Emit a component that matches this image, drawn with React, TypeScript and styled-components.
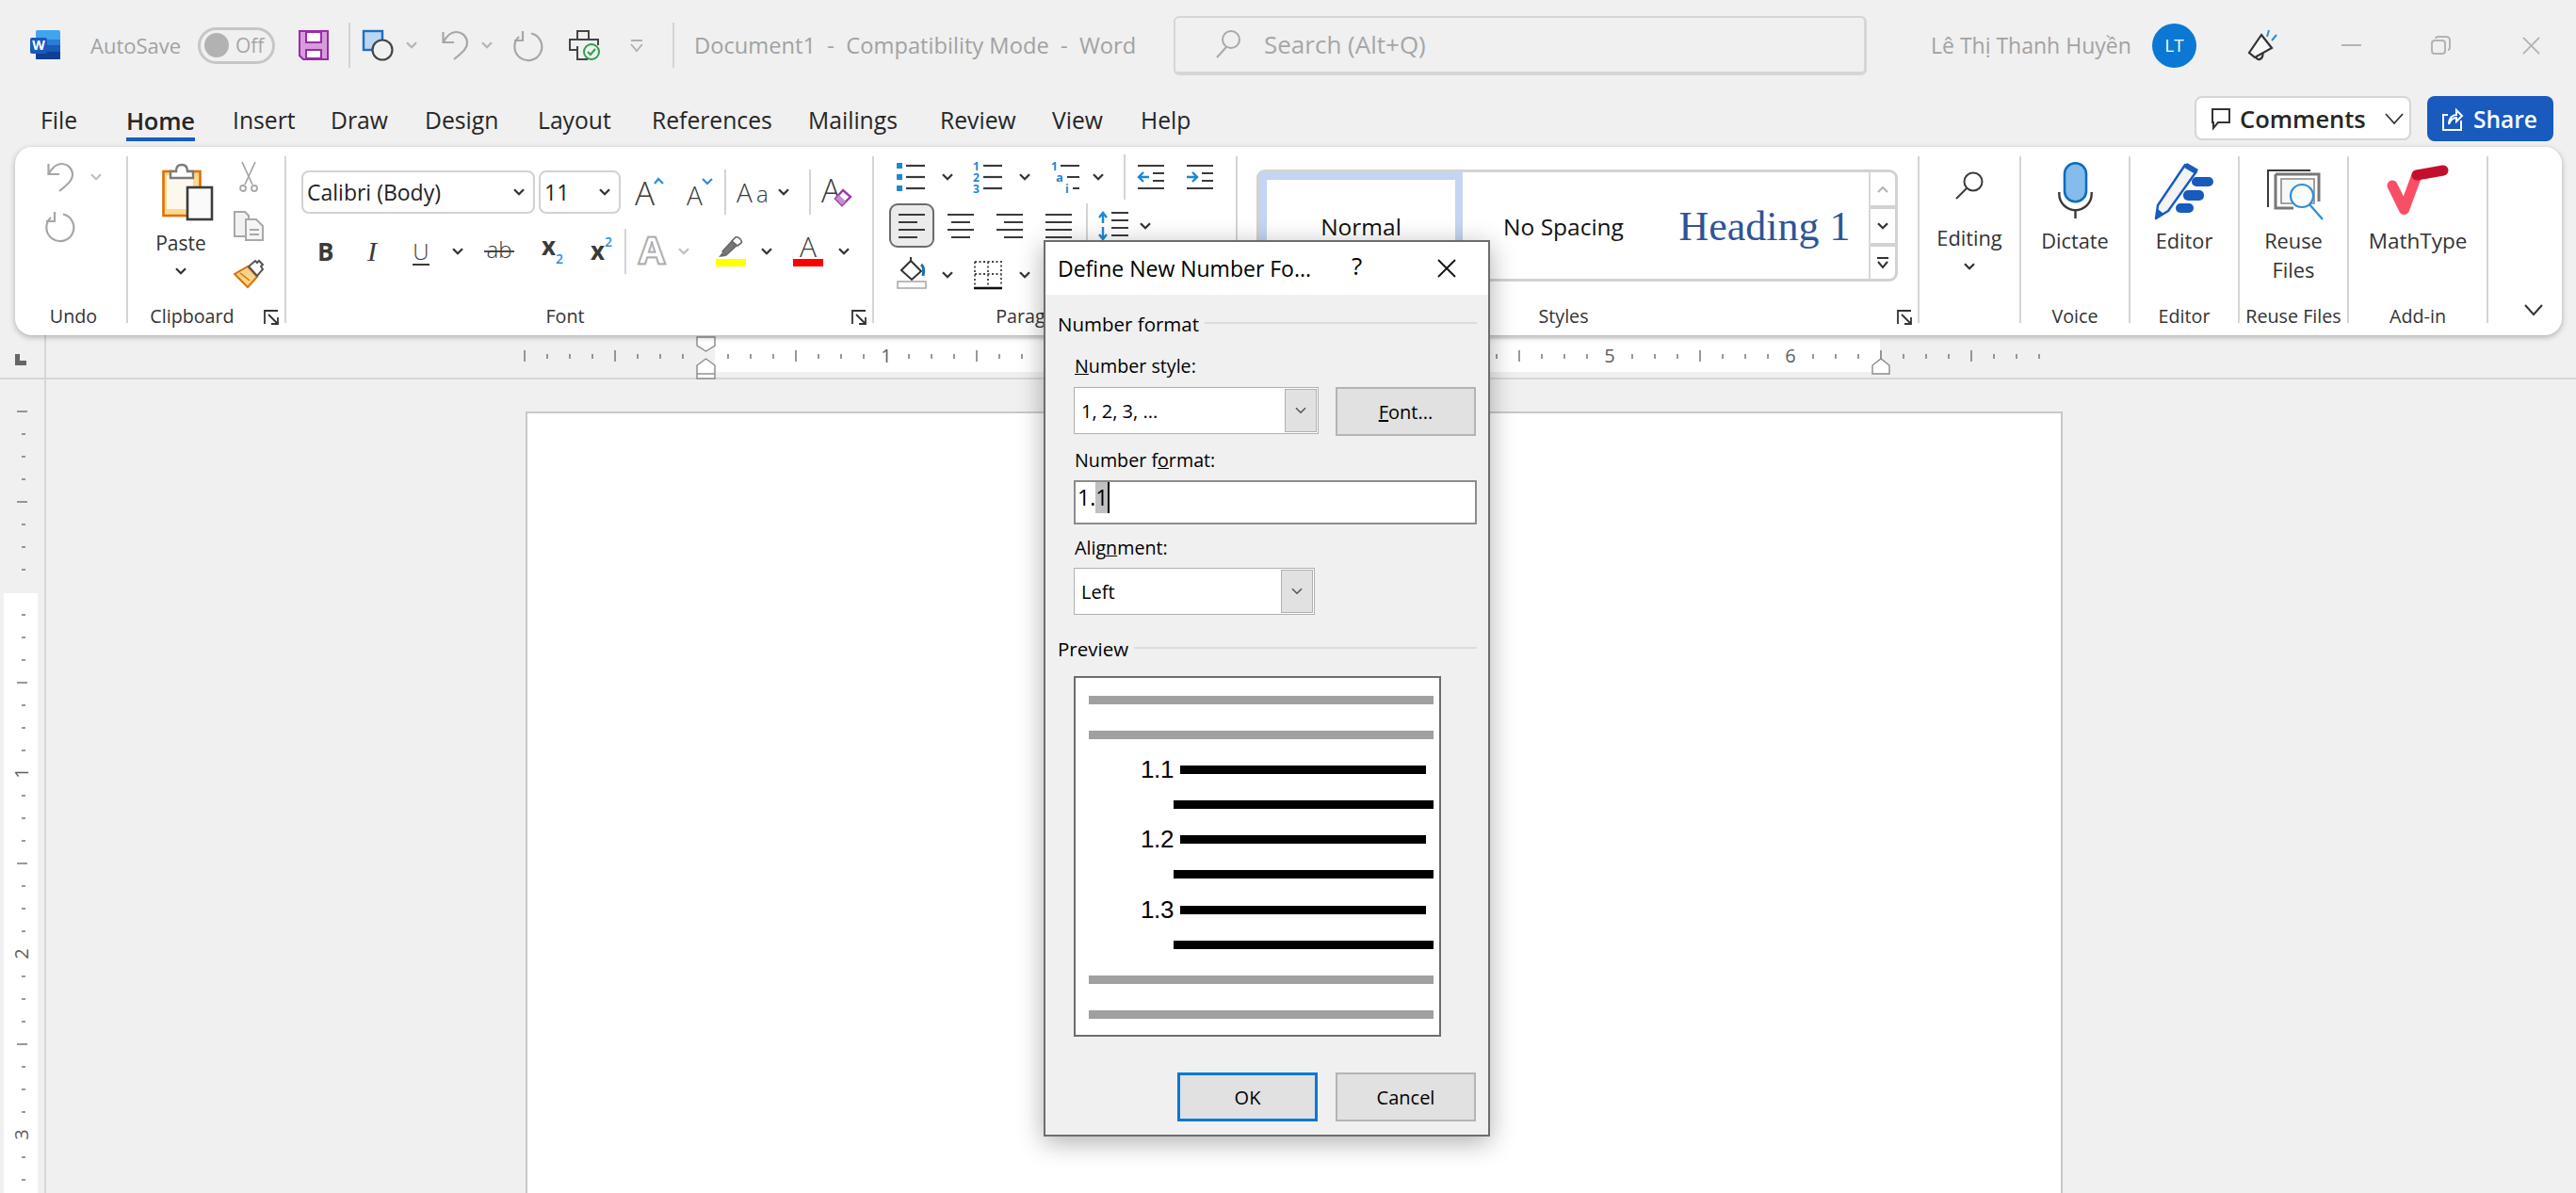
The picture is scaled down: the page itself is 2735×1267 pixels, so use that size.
import React from "react";
import styled, { createGlobalStyle } from "styled-components";

const GlobalStyle = createGlobalStyle`
  html, body {
    margin: 0;
    padding: 0;
    background: #f0f0f0;
    overflow: hidden;
    font-family: "Open Sans", "Noto Sans", sans-serif;
  }
  svg text {
    font-family: "Open Sans", "Noto Sans", sans-serif;
  }
`;

const Shell = styled.div`
  position: relative;
  width: 2735px;
  height: 1267px;
  overflow: hidden;
  background: #f0f0f0;
  color: #262626;
`;

const Ico = styled.svg<{ $ml?: number; $mt?: number }>`
  display: block;
  flex: none;
  overflow: visible;
  margin-left: ${(p) => p.$ml ?? 0}px;
  margin-top: ${(p) => p.$mt ?? 0}px;
`;

type IconProps = { ml?: number; mt?: number; c?: string; sw?: number };

const Chev = ({ ml, mt, c = "#333", sw = 2.3 }: IconProps) => (
  <Ico $ml={ml} $mt={mt} width={12} height={8} viewBox="0 0 12 8" fill="none">
    <path d="M1 1.2L6 6.2L11 1.2" stroke={c} strokeWidth={sw} />
  </Ico>
);

const UndoIcon = ({ ml, mt, c = "#a6a6a6" }: IconProps) => (
  <Ico $ml={ml} $mt={mt} width={28} height={32} viewBox="0 0 28 32" fill="none" stroke={c} strokeWidth={2.2}>
    <path d="M1.5 2V13H13" />
    <path d="M1.5 13C6 5 11 2 15 2C22 2 27 7 27 14C27 19 23 23 13 31" />
  </Ico>
);

const RedoIcon = ({ ml, mt, c = "#a6a6a6" }: IconProps) => (
  <Ico $ml={ml} $mt={mt} width={32} height={32} viewBox="0 0 32 32" fill="none" stroke={c} strokeWidth={2.2}>
    <path d="M19 3.5A14.5 14.5 0 1 1 6 7" />
    <path d="M10 1V11H1" />
  </Ico>
);

const WordLogo = () => (
  <Ico $ml={32} width={32} height={32} viewBox="0 0 32 32">
    <rect x={6} y={0} width={26} height={31} rx={2} fill="#41a5ee" />
    <rect x={6} y={10} width={26} height={21} fill="#2b7cd3" />
    <rect x={6} y={16} width={26} height={15} fill="#185abd" />
    <path d="M6 23H32V29Q32 31 30 31H8Q6 31 6 29Z" fill="#103f91" />
    <rect x={0} y={8} width={18} height={17} rx={2} fill="#185abd" />
    <text x={9} y={21} fontSize={14} fontWeight={700} fill="#fff" textAnchor="middle">
      W
    </text>
  </Ico>
);

const SaveIcon = () => (
  <Ico $ml={25} width={32} height={32} viewBox="0 0 32 32" stroke="#9a2aa8" strokeWidth={2}>
    <path d="M1 1H31V31H5L1 27Z" fill="#d79ddb" />
    <rect x={8} y={2} width={16} height={11} fill="#fff" />
    <rect x={8} y={21} width={16} height={9} fill="#fff" />
  </Ico>
);

const ShapesIcon = () => (
  <Ico $ml={13} width={33} height={32} viewBox="0 0 33 32">
    <rect x={1} y={1} width={20} height={20} fill="#b9d6f2" stroke="#1e6fbf" strokeWidth={2.4} />
    <circle cx={21} cy={21} r={10.5} fill="#f0f0f0" stroke="#444" strokeWidth={2.2} />
  </Ico>
);

const PrintIcon = () => (
  <Ico $ml={27} width={32} height={32} viewBox="0 0 32 32" fill="none">
    <path d="M9 9V1H21V9" stroke="#444" strokeWidth={2} />
    <path d="M9 21H1V10H31V16" stroke="#444" strokeWidth={2} />
    <path d="M9 17V31H20" stroke="#444" strokeWidth={2} />
    <circle cx={24} cy={23} r={8} fill="#f0f0f0" stroke="#2e9e4f" strokeWidth={2} />
    <path d="M20 23L23 26L28 20" stroke="#2e9e4f" strokeWidth={2} />
  </Ico>
);

const CustomizeIcon = () => (
  <Ico $ml={32} width={16} height={13} viewBox="0 0 16 13" fill="none" stroke="#b0b0b0" strokeWidth={1.8}>
    <path d="M2 1H14M2 5L8 12L14 5" />
  </Ico>
);

const SearchGlass = () => (
  <Ico $ml={43} width={26} height={30} viewBox="0 0 26 30" fill="none" stroke="#a8a8a8" strokeWidth={2}>
    <circle cx={16} cy={10} r={9} />
    <path d="M11 18L1 29" />
  </Ico>
);

const MegaphoneIcon = () => (
  <Ico $ml={55} width={30} height={32} viewBox="0 0 30 32" fill="none">
    <path d="M14 5L25 19L7 29L1 24Z" stroke="#333" strokeWidth={2.2} fill="#f7f7f7" />
    <path d="M8 28C9 33 16 32 15.5 24" stroke="#333" strokeWidth={2.2} />
    <path d="M20 7L22 0M25 11L30 5" stroke="#2b8fd9" strokeWidth={2} />
  </Ico>
);

const RestoreIcon = () => (
  <Ico $ml={74} width={21} height={20} viewBox="0 0 21 20" fill="none" stroke="#b4b4b4" strokeWidth={2}>
    <rect x={1} y={5} width={14} height={14} rx={3} />
    <path d="M5 3Q5 1 8 1H16Q20 1 20 5V12Q20 15 18 15" />
  </Ico>
);

const CloseGlyph = ({ ml, size, c, sw }: { ml: number; size: number; c: string; sw: number }) => (
  <Ico $ml={ml} width={size} height={size} viewBox="0 0 20 20" fill="none" stroke={c} strokeWidth={sw}>
    <path d="M1 1L19 19M19 1L1 19" />
  </Ico>
);

const CommentBubble = () => (
  <Ico width={20} height={22} viewBox="0 0 20 22" fill="none" stroke="#333" strokeWidth={2}>
    <path d="M1 1H19V15H7L2 21V15H1Z" />
  </Ico>
);

const ShareIcon = () => (
  <Ico width={22} height={26} viewBox="0 0 22 26" fill="none" stroke="#fff" strokeWidth={2}>
    <path d="M6 9H1V25H20V15" />
    <path d="M7 19C7 12 11 9 15 9V4L21 10L15 16V12C11 12 9 14 7 19Z" />
  </Ico>
);

const PasteIcon = () => (
  <Ico $ml={14} width={54} height={61} viewBox="0 0 54 61">
    <rect x={1.5} y={9} width={39} height={47} fill="#fdd98f" stroke="#e07000" strokeWidth={2.6} />
    <rect x={5} y={13} width={28} height={36} fill="#fdf8ee" />
    <path d="M9 16V9H15Q15 2 21 2Q27 2 27 9H33V16Z" fill="#fff" stroke="#7a7a7a" strokeWidth={2.4} />
    <rect x={27} y={26} width={26} height={34} fill="#fafafa" stroke="#3c3c3c" strokeWidth={2.6} />
  </Ico>
);

const ScissorsIcon = () => (
  <Ico $ml={6} width={20} height={32} viewBox="0 0 20 32" fill="none" stroke="#a8a8a8" strokeWidth={1.8}>
    <path d="M3 0L14 24M17 0L6 24" />
    <circle cx={4} cy={28} r={3} />
    <circle cx={16} cy={28} r={3} />
  </Ico>
);

const CopyIcon = () => (
  <Ico $mt={20} width={32} height={32} viewBox="0 0 32 32" fill="#f2f2f2" stroke="#a8a8a8" strokeWidth={2}>
    <path d="M1 1H12L16 5V27H1Z" />
    <path d="M13 9H24L31 16V31H13Z" fill="#f5f5f5" />
    <path d="M17 20H27M17 25H27" />
  </Ico>
);

const PainterIcon = () => (
  <Ico $mt={20} width={32} height={30} viewBox="0 0 32 30">
    <path d="M1 15L15 7L25 18L15 29Z" fill="#f6d58d" stroke="#e07000" strokeWidth={2} />
    <path d="M7 14L17 22" stroke="#e07000" strokeWidth={1.6} />
    <path d="M16 7L23 1L25 3L27 1L31 5L29 7L31 10L25 17Z" fill="#fff" stroke="#555" strokeWidth={2} />
  </Ico>
);

const LauncherIcon = () => (
  <svg width={16} height={16} viewBox="0 0 16 16" fill="none" stroke="#333" strokeWidth={1.8}>
    <path d="M1 15V1H15" />
    <path d="M5 5L15 15M15 8V15H8" />
  </svg>
);

const GrowIcon = () => (
  <Ico $ml={15} width={30} height={34} viewBox="0 0 30 34">
    <text x={0} y={31} fontSize={35} fontWeight={300} fill="#3a3a3a">
      A
    </text>
    <path d="M21 8L25 3L30 8" stroke="#2b8fd9" strokeWidth={2.2} fill="none" />
  </Ico>
);

const ShrinkIcon = () => (
  <Ico $ml={25} width={27} height={34} viewBox="0 0 27 34">
    <text x={0} y={31} fontSize={28} fontWeight={300} fill="#3a3a3a">
      A
    </text>
    <path d="M17 3L22 8L27 3" stroke="#2b8fd9" strokeWidth={2.2} fill="none" />
  </Ico>
);

const CaseIcon = () => (
  <Ico $ml={12} width={32} height={30} viewBox="0 0 32 30">
    <text x={-1} y={26} fontSize={28} fontWeight={300} fill="#3a3a3a">
      A
    </text>
    <text x={20} y={26} fontSize={24} fontWeight={300} fill="#3a3a3a">
      a
    </text>
  </Ico>
);

const ClearIcon = () => (
  <Ico $ml={11} width={32} height={34} viewBox="0 0 32 34">
    <text x={0} y={28} fontSize={34} fontWeight={300} fill="#3a3a3a">
      A
    </text>
    <path d="M15 24L23 15L31 22L22 31Z" fill="#fff" stroke="#9a3aa8" strokeWidth={2.4} />
    <path d="M15 24L19 20L26 27L22 31Z" fill="#c78ad0" />
  </Ico>
);

const StrikeIcon = () => (
  <Ico $ml={22} width={32} height={24} viewBox="0 0 32 24">
    <text x={16} y={19} fontSize={24} fontWeight={300} fill="#3a3a3a" textAnchor="middle">
      ab
    </text>
    <path d="M0 12H32" stroke="#3a3a3a" strokeWidth={1.8} />
  </Ico>
);

const SubIcon = () => (
  <Ico $ml={29} width={22} height={30} viewBox="0 0 22 30">
    <text x={0} y={19} fontSize={26} fontWeight={700} fill="#3a3a3a">
      x
    </text>
    <text x={15} y={28} fontSize={14} fontWeight={600} fill="#2b8fd9">
      2
    </text>
  </Ico>
);

const SupIcon = () => (
  <Ico $ml={30} width={22} height={30} viewBox="0 0 22 30">
    <text x={0} y={24} fontSize={26} fontWeight={700} fill="#3a3a3a">
      x
    </text>
    <text x={15} y={10} fontSize={14} fontWeight={600} fill="#2b8fd9">
      2
    </text>
  </Ico>
);

const EffectsIcon = () => (
  <Ico $ml={11} width={32} height={32} viewBox="0 0 32 32">
    <text x={16} y={29} fontSize={40} fontWeight={700} fill="#f4f4f4" stroke="#c4c4c4" strokeWidth={3} textAnchor="middle">
      A
    </text>
    <text x={16} y={29} fontSize={40} fontWeight={700} fill="#fff" stroke="#9c9c9c" strokeWidth={1} textAnchor="middle">
      A
    </text>
  </Ico>
);

const HighlightIcon = () => (
  <Ico $ml={28} width={32} height={32} viewBox="0 0 32 32">
    <path d="M3 22L7 17L11 21Z" fill="#666" />
    <path d="M7 16L18 4L23 9L11 20Z" fill="#777" stroke="#666" strokeWidth={1.4} />
    <path d="M17 5L21 1Q23 0 26 3Q28 5 27 7L23 10Z" fill="#fff" stroke="#666" strokeWidth={1.6} />
    <rect x={0} y={24} width={32} height={8} fill="#ffff00" />
  </Ico>
);

const FontColorIcon = () => (
  <Ico $ml={22} width={32} height={32} viewBox="0 0 32 32">
    <text x={16} y={22} fontSize={30} fontWeight={300} fill="#3a3a3a" textAnchor="middle">
      A
    </text>
    <rect x={0} y={24} width={32} height={8} fill="#ff0000" />
  </Ico>
);

const BLUE = "#1e88d2";
const INK = "#3a3a3a";

const BulletsIcon = () => (
  <Ico $ml={24} width={30} height={30} viewBox="0 0 30 30" stroke={INK} strokeWidth={2.2}>
    {[0, 12, 24].map((y) => (
      <g key={y}>
        <rect x={0} y={y} width={6} height={6} fill={BLUE} stroke="none" />
        <path d={`M10 ${y + 3}H30`} />
      </g>
    ))}
  </Ico>
);

const NumberingIcon = () => (
  <Ico $ml={21} width={31} height={34} viewBox="0 0 31 34">
    {[1, 2, 3].map((n, i) => (
      <g key={n}>
        <text x={0} y={10 + i * 12} fontSize={12} fontWeight={700} fill={BLUE}>
          {n}
        </text>
        <path d={`M11 ${5 + i * 12}H31`} stroke={INK} strokeWidth={2.2} />
      </g>
    ))}
  </Ico>
);

const MultilevelIcon = () => (
  <Ico $ml={22} width={30} height={34} viewBox="0 0 30 34">
    <text x={0} y={10} fontSize={12} fontWeight={700} fill={BLUE}>
      1
    </text>
    <text x={5} y={22} fontSize={13} fontWeight={700} fill={BLUE}>
      a
    </text>
    <text x={15} y={34} fontSize={12} fontWeight={700} fill={BLUE}>
      i
    </text>
    <path d="M10 5H30M17 17H30M23 29H30" stroke={INK} strokeWidth={2.2} />
  </Ico>
);

const IndentIcon = ({ ml, out }: { ml: number; out?: boolean }) => (
  <Ico $ml={ml} width={28} height={26} viewBox="0 0 28 26" fill="none">
    <path d="M0 1H28M16 9H28M16 17H28M0 25H28" stroke={INK} strokeWidth={2.2} />
    <path d={out ? "M12 13H1M6 8L1 13L6 18" : "M0 13H11M6 8L11 13L6 18"} stroke={BLUE} strokeWidth={2.4} />
  </Ico>
);

const AlignIcon = ({ ml, mode }: { ml?: number; mode: "left" | "center" | "right" | "justify" }) => {
  const short = mode === "left" ? "H20" : mode === "center" ? "H24" : "H28";
  const start = mode === "left" ? 0 : mode === "center" ? 4 : mode === "right" ? 8 : 0;
  return (
    <Ico $ml={ml} width={28} height={26} viewBox="0 0 28 26" stroke={INK} strokeWidth={2.2}>
      <path d={`M0 1H28M${start} 9${short}M0 17H28M${start} 25${short}`} />
    </Ico>
  );
};

const LineSpacingIcon = () => (
  <Ico $ml={11} width={32} height={30} viewBox="0 0 32 30" fill="none">
    <path d="M14 1H32M14 9H32M14 17H32M14 25H32" stroke={INK} strokeWidth={2.2} />
    <path d="M5 12V1M1 6L5 1L9 6M5 16V29M1 24L5 29L9 24" stroke={BLUE} strokeWidth={2.4} />
  </Ico>
);

const ShadingIcon = () => (
  <Ico $ml={24} width={32} height={33} viewBox="0 0 32 33" fill="none">
    <path d="M5 12L15 2L26 13L16 22Z" stroke="#333" strokeWidth={2} />
    <path d="M15 2V-2" stroke="#333" strokeWidth={2} />
    <path d="M26 6Q30 9 28 18" stroke="#1a6fb8" strokeWidth={3} />
    <rect x={1} y={24} width={30} height={7} fill="#fff" stroke="#aaa" strokeWidth={1.6} />
  </Ico>
);

const BordersIcon = () => (
  <Ico $ml={22} width={30} height={30} viewBox="0 0 30 30" fill="none">
    <path d="M1 1H29V26M1 1V26M15 1V26M1 14H29" stroke="#444" strokeWidth={1.8} strokeDasharray="2 2.5" />
    <path d="M0 29H30" stroke="#111" strokeWidth={2.6} />
  </Ico>
);

const GlassIcon = () => (
  <Ico width={30} height={30} viewBox="0 0 30 30" fill="none" stroke="#3a3a3a" strokeWidth={2}>
    <circle cx={19} cy={11} r={9.5} />
    <path d="M12 18L1 29" />
  </Ico>
);

const MicIcon = () => (
  <Ico width={37} height={60} viewBox="0 0 37 60" fill="none">
    <rect x={7} y={1.3} width={23} height={41} rx={11.5} fill="#85bcec" stroke="#0f6cbd" strokeWidth={2.6} />
    <path d="M1.3 32V34A17 17 0 0 0 35.7 34V32" stroke="#3a3a3a" strokeWidth={2.4} />
    <path d="M18.5 50V60" stroke="#3a3a3a" strokeWidth={2.4} />
  </Ico>
);

const EditorIcon = () => (
  <Ico width={62} height={61} viewBox="0 0 62 61">
    <rect x={39} y={16} width={23} height={10} rx={5} fill="#185abd" />
    <rect x={30} y={30} width={22} height={11} rx={5} fill="#185abd" />
    <rect x={22} y={44} width={19} height={10} rx={5} fill="#185abd" />
    <path d="M1 60L3 46L32 3L44 10L14 52Z" fill="#f3f3f3" stroke="#185abd" strokeWidth={2.4} strokeLinejoin="round" />
    <path d="M34 1L46 8L43 13L31 6Z" fill="#185abd" />
    <path d="M1 60L3 50L9 55Z" fill="#185abd" />
  </Ico>
);

const ReuseIcon = () => (
  <Ico $ml={3} width={60} height={53} viewBox="0 0 60 53" fill="none">
    <path d="M1 40V1H46" stroke="#3a3a3a" strokeWidth={2} />
    <path d="M9 5H55V34" stroke="#777" strokeWidth={3} />
    <path d="M9 5V41H28" stroke="#777" strokeWidth={3} />
    <path d="M15 10H50V36H15Z" fill="#f7f7f7" stroke="#888" strokeWidth={1.6} />
    <circle cx={37} cy={28} r={12} fill="#fbfbfb" stroke="#2b8fd9" strokeWidth={2.2} />
    <path d="M45 37L59 53" stroke="#2b8fd9" strokeWidth={2.2} />
  </Ico>
);

const MathTypeIcon = () => (
  <Ico width={64} height={54} viewBox="0 0 64 54" fill="none" strokeLinecap="round">
    <path d="M5 22L17.5 47.5L31 11" stroke="#f94f66" strokeWidth={11} strokeLinejoin="round" />
    <path d="M31 11L59 6" stroke="#c30f2e" strokeWidth={11} />
  </Ico>
);

const GalleryScrollUp = () => (
  <Ico width={12} height={8} viewBox="0 0 12 8" fill="none">
    <path d="M1 7L6 2L11 7" stroke="#b4b4b4" strokeWidth={2} />
  </Ico>
);

const GalleryMore = () => (
  <Ico width={12} height={12} viewBox="0 0 12 12" fill="none" stroke="#333" strokeWidth={2}>
    <path d="M0 1H12M1 5L6 11L11 5" />
  </Ico>
);

const CollapseChevron = () => (
  <Ico width={20} height={12} viewBox="0 0 20 12" fill="none" stroke="#333" strokeWidth={2}>
    <path d="M1 1L10 11L19 1" />
  </Ico>
);

/* title bar */

const TitleBar = styled.header`
  display: flex;
  align-items: center;
  height: 96px;
`;

const TitleText = styled.span<{ $ml: number; $w: number; $size?: number }>`
  flex: none;
  width: ${(p) => p.$w}px;
  margin-left: ${(p) => p.$ml}px;
  font-size: ${(p) => p.$size ?? 22}px;
  color: #a2a2a2;
  white-space: pre;
`;

const Toggle = styled.div`
  flex: none;
  box-sizing: border-box;
  display: flex;
  align-items: center;
  width: 82px;
  height: 39px;
  margin-left: 18px;
  padding-left: 4px;
  gap: 7px;
  border: 3px solid #c6c6c6;
  border-radius: 20px;
  font-size: 21px;
  color: #a6a6a6;
`;

const ToggleKnob = styled.span`
  width: 26px;
  height: 26px;
  border-radius: 50%;
  background: #b2b2b2;
`;

const TitleDivider = styled.span<{ $ml: number }>`
  flex: none;
  width: 2px;
  height: 48px;
  margin-left: ${(p) => p.$ml}px;
  background: #d4d4d4;
`;

const SearchBox = styled.div`
  flex: none;
  box-sizing: border-box;
  display: flex;
  align-items: center;
  width: 736px;
  height: 63px;
  margin-left: 41px;
  border: 2px solid #d6d6d6;
  border-bottom-width: 4px;
  border-right-width: 3px;
  border-radius: 6px;
  font-size: 26px;
  color: #a6a6a6;
`;

const SearchHint = styled.span`
  margin-left: 25px;
`;

const Avatar = styled.span`
  flex: none;
  display: flex;
  align-items: center;
  justify-content: center;
  width: 47px;
  height: 47px;
  margin-left: 21px;
  border-radius: 50%;
  background: #0a78d4;
  color: #fff;
  font-size: 19px;
`;

const MinLine = styled.span`
  flex: none;
  width: 21px;
  height: 2px;
  margin-left: 69px;
  background: #b4b4b4;
`;

/* tabs */

const TabRow = styled.nav`
  display: flex;
  height: 60px;
  box-sizing: border-box;
  padding-left: 43px;
  padding-top: 6px;
`;

const TabList = styled.div`
  display: flex;
  padding-top: 8px;
`;

const Tab = styled.div<{ $w: number }>`
  width: ${(p) => p.$w}px;
  flex: none;
  font-size: 24.7px;
  line-height: 36px;
  color: #262626;
`;

const ActiveTabLabel = styled.span`
  display: inline-block;
  font-weight: 600;
  font-size: 25.5px;
  letter-spacing: -0.3px;
  border-bottom: 4px solid #185abd;
`;

const CommentsButton = styled.div`
  box-sizing: border-box;
  display: flex;
  align-items: center;
  width: 230px;
  height: 47px;
  margin-left: auto;
  padding-left: 16px;
  background: #fff;
  border: 2px solid #d6d6d6;
  border-radius: 8px;
  font-size: 25.5px;
  font-weight: 600;
`;

const CommentsLabel = styled.span`
  margin-left: 10px;
  margin-right: 20px;
`;

const ShareButton = styled.div`
  display: flex;
  align-items: center;
  gap: 11px;
  box-sizing: border-box;
  width: 134px;
  height: 48px;
  margin-left: 17px;
  margin-right: 24px;
  padding-left: 16px;
  background: #185abd;
  border-radius: 8px;
  color: #fff;
  font-size: 24.5px;
  font-weight: 600;
`;

/* ribbon */

const Ribbon = styled.section`
  position: relative;
  z-index: 2;
  display: flex;
  box-sizing: border-box;
  width: 2704px;
  height: 200px;
  margin-left: 16px;
  padding-top: 10px;
  background: #fff;
  border-radius: 18px;
  box-shadow: 0 2px 6px rgba(0, 0, 0, 0.28);
`;

const Group = styled.div<{ $w: number }>`
  position: relative;
  flex: none;
  display: flex;
  flex-direction: column;
  box-sizing: border-box;
  width: ${(p) => p.$w}px;
  height: 177px;
  border-right: 2px solid #d4d4d4;
`;

const GroupBody = styled.div`
  flex: 1;
  min-height: 0;
`;

const GroupLabel = styled.div<{ $launcher?: boolean; $pl?: number }>`
  flex: none;
  box-sizing: border-box;
  height: 14px;
  line-height: 14px;
  padding-right: ${(p) => (p.$launcher ? 30 : 0)}px;
  padding-left: ${(p) => p.$pl ?? 0}px;
  font-size: 19.7px;
  text-align: center;
  color: #333;
`;

const Launcher = styled.span`
  position: absolute;
  right: 6px;
  bottom: -1px;
  height: 16px;
`;

const StackRow = styled.div<{ $h: number; $mt: number; $ml?: number }>`
  display: flex;
  align-items: center;
  height: ${(p) => p.$h}px;
  margin-top: ${(p) => p.$mt}px;
  padding-left: ${(p) => p.$ml ?? 0}px;
`;

const RowDivider = styled.span<{ $ml: number }>`
  flex: none;
  width: 2px;
  height: 48px;
  margin-left: ${(p) => p.$ml}px;
  background: #d4d4d4;
`;

const ClipboardBody = styled(GroupBody)`
  display: flex;
`;

const BigButton = styled.div<{ $w?: number }>`
  flex: none;
  display: flex;
  flex-direction: column;
  align-items: center;
  width: ${(p) => (p.$w ? `${p.$w}px` : "100%")};
`;

const BigIconSlot = styled.div<{ $h: number; $pt: number }>`
  box-sizing: border-box;
  display: flex;
  justify-content: center;
  height: ${(p) => p.$h}px;
  padding-top: ${(p) => p.$pt}px;
`;

const BigLabel = styled.div<{ $size?: number }>`
  font-size: ${(p) => p.$size ?? 21.8}px;
  line-height: 31px;
  color: #333;
  white-space: nowrap;
`;

const SmallTools = styled.div`
  display: flex;
  flex-direction: column;
  padding-top: 6px;
`;

const Combo = styled.div<{ $w: number; $ml: number }>`
  flex: none;
  box-sizing: border-box;
  display: flex;
  align-items: center;
  width: ${(p) => p.$w}px;
  height: 46px;
  margin-left: ${(p) => p.$ml}px;
  padding: 0 9px 0 4px;
  border: 2px solid #d2d2d2;
  border-radius: 8px;
  font-size: 23px;
  color: #222;
`;

const ComboText = styled.span`
  flex: 1;
`;

const BoldGlyph = styled.span`
  flex: none;
  width: 15px;
  margin-left: 33px;
  font-size: 26px;
  font-weight: 700;
  line-height: 26px;
  color: #3a3a3a;
`;

const ItalicGlyph = styled.span`
  flex: none;
  width: 13px;
  margin-left: 38px;
  font-family: "Liberation Serif", serif;
  font-size: 30px;
  font-style: italic;
  line-height: 30px;
  color: #3a3a3a;
`;

const UnderlineGlyph = styled.span`
  flex: none;
  width: 18px;
  margin-left: 35px;
  font-size: 24px;
  font-weight: 300;
  line-height: 27px;
  text-align: center;
  border-bottom: 2.5px solid #3a3a3a;
  color: #3a3a3a;
`;

const SelectedAlign = styled.div`
  flex: none;
  box-sizing: border-box;
  display: flex;
  align-items: center;
  justify-content: center;
  width: 48px;
  height: 47px;
  margin-left: 16px;
  background: #ebebeb;
  border: 2px solid #6b6b6b;
  border-radius: 9px;
`;

const Gallery = styled.div`
  box-sizing: border-box;
  display: flex;
  width: 681px;
  height: 119px;
  margin: 14px 0 0 20px;
  border: 3px solid #d2d2d2;
  border-radius: 9px;
`;

const StyleCell = styled.div<{ $w: number; $active?: boolean; $serif?: boolean }>`
  flex: none;
  box-sizing: border-box;
  display: flex;
  align-items: center;
  justify-content: center;
  width: ${(p) => p.$w}px;
  height: 113px;
  padding-top: 2px;
  border: ${(p) => (p.$active ? "8px solid #c3d5f2" : "none")};
  font-family: ${(p) => (p.$serif ? '"Liberation Serif", serif' : "inherit")};
  font-size: ${(p) => (p.$serif ? 44 : 24.5)}px;
  color: ${(p) => (p.$serif ? "#2f5496" : "#111")};
`;

const GalleryRail = styled.div`
  display: flex;
  flex-direction: column;
  width: 26px;
  margin-left: auto;
  border-left: 2px solid #d8d8d8;
`;

const RailCell = styled.div<{ $h: number }>`
  display: flex;
  align-items: center;
  justify-content: center;
  height: ${(p) => p.$h}px;
  & + & {
    border-top: 4px solid #d2d2d2;
  }
`;

const CollapseSlot = styled.div`
  position: absolute;
  right: 20px;
  bottom: 21px;
`;

/* rulers and document */

const RulerBar = styled.div`
  display: flex;
  box-sizing: border-box;
  height: 47px;
  border-bottom: 2px solid #d6d6d6;
`;

const RulerCorner = styled.div`
  flex: none;
  box-sizing: border-box;
  width: 49px;
  padding: 20px 0 0 16px;
  border-right: 2px solid #d6d6d6;
`;

const TabStopMark = styled.span`
  display: block;
  box-sizing: border-box;
  width: 12px;
  height: 12px;
  border-left: 5px solid #666;
  border-bottom: 5px solid #666;
`;

const Workspace = styled.div`
  display: flex;
  height: 864px;
`;

const VerticalRuler = styled.div`
  flex: none;
  box-sizing: border-box;
  width: 49px;
  height: 100%;
  border-right: 2px solid #d6d6d6;
`;

const DocArea = styled.main`
  flex: 1;
  box-sizing: border-box;
  height: 100%;
  padding: 34px 0 0 509px;
`;

const DocPage = styled.div`
  box-sizing: border-box;
  width: 1632px;
  height: 100%;
  background: #fff;
  border: 2px solid #c8c8c8;
  border-bottom: none;
`;

const TICKS = Array.from({ length: 68 }, (_, i) => i);

const HorizontalRulerArt = () => {
  const ox = 49;
  const oy = 356;
  return (
    <Ico width={2686} height={47} viewBox={`${ox} ${oy} 2686 47`}>
      <rect x={759} y={360} width={1237} height={35} fill="#fff" />
      {TICKS.map((k) => {
        const x = 557 + 24 * k;
        const rel = (x - 749) / 24;
        if (rel === 0) return null;
        if (rel % 8 === 0 && rel >= 8 && rel <= 48)
          return (
            <text key={k} x={x} y={385} fontSize={20} fill="#606060" textAnchor="middle">
              {rel / 8}
            </text>
          );
        const big = rel % 4 === 0;
        return (
          <path key={k} d={`M${x} ${big ? 372 : 376}V${big ? 384 : 381}`} stroke="#6e6e6e" strokeWidth={1.4} />
        );
      })}
      <g fill="#fff" stroke="#8a8a8a" strokeWidth={1.4}>
        <path d="M740 358H759V367L749.5 373L740 367Z" />
        <path d="M740 402V388L749.5 381L759 388V402Z" />
        <path d="M740 397H759" />
        <path d="M1988 397V388L1997 381L2006 388V397Z" />
      </g>
    </Ico>
  );
};

const VTICKS = Array.from({ length: 35 }, (_, i) => i);

const VerticalRulerArt = () => (
  <svg width={47} height={864} viewBox="0 403 47 864">
    <rect x={4} y={630} width={36} height={640} fill="#fff" />
    {VTICKS.map((k) => {
      const y = 437 + 24 * k;
      const rel = (y - 629) / 24;
      if (rel === 0) return null;
      if (rel % 8 === 0 && rel > 0)
        return (
          <text key={k} x={30} y={y} fontSize={20} fill="#606060" textAnchor="middle" transform={`rotate(-90 30 ${y})`}>
            {rel / 8}
          </text>
        );
      const big = rel % 4 === 0;
      return <path key={k} d={`M${big ? 18 : 23} ${y}H${big ? 29 : 27}`} stroke="#6e6e6e" strokeWidth={1.4} />;
    })}
  </svg>
);

/* dialog */

const Dialog = styled.div`
  position: absolute;
  z-index: 5;
  left: 1108px;
  top: 255px;
  box-sizing: border-box;
  width: 474px;
  height: 952px;
  display: flex;
  flex-direction: column;
  border: 2px solid #6d6d6d;
  background: #f0f0f0;
  color: #000;
  font-size: 20px;
  box-shadow: 0 6px 26px rgba(0, 0, 0, 0.32);
`;

const DialogTitleBar = styled.div`
  flex: none;
  display: flex;
  align-items: center;
  height: 56px;
  padding-left: 13px;
  background: #fff;
  font-size: 23px;
`;

const DialogTitle = styled.span`
  flex: none;
  width: 312px;
`;

const HelpMark = styled.span`
  flex: none;
  width: 20px;
  margin-bottom: 6px;
  font-size: 26px;
`;

const DialogBody = styled.div`
  flex: 1;
  padding: 17px 12px 0 13px;
`;

const Legend = styled.div<{ $mt?: number }>`
  display: flex;
  align-items: center;
  height: 28px;
  margin-top: ${(p) => p.$mt ?? 0}px;
  font-size: 20.5px;
  &::after {
    content: "";
    flex: 1;
    height: 2px;
    margin-left: 6px;
    margin-bottom: 3px;
    background: #dcdcdc;
  }
`;

const FieldLabel = styled.div<{ $mt: number }>`
  height: 28px;
  line-height: 28px;
  margin: ${(p) => p.$mt}px 0 0 18px;
  font-size: 19.7px;
`;

const FieldRow = styled.div<{ $mt: number }>`
  display: flex;
  align-items: flex-start;
  margin: ${(p) => p.$mt}px 0 0 17px;
`;

const DropDown = styled.div<{ $w: number }>`
  flex: none;
  box-sizing: border-box;
  display: flex;
  width: ${(p) => p.$w}px;
  height: 50px;
  background: #fff;
  border: 1.5px solid #b0b0b0;
`;

const DropDownText = styled.span`
  flex: 1;
  padding-left: 7px;
  line-height: 50px;
  font-size: 20px;
`;

const DropDownArrow = styled.span`
  flex: none;
  box-sizing: border-box;
  display: flex;
  align-items: center;
  justify-content: center;
  width: 34px;
  margin: 1px;
  background: #e1e1e1;
  border: 1.5px solid #b0b0b0;
`;

const DialogButton = styled.div<{ $ml?: number; $primary?: boolean }>`
  flex: none;
  box-sizing: border-box;
  display: flex;
  align-items: center;
  justify-content: center;
  width: 149px;
  height: 52px;
  margin-left: ${(p) => p.$ml ?? 0}px;
  background: #e1e1e1;
  border: ${(p) => (p.$primary ? "3px solid #0078d7" : "2px solid #b4b4b4")};
  font-size: 20px;
`;

const FormatInput = styled.div`
  box-sizing: border-box;
  display: flex;
  width: 428px;
  height: 47px;
  padding-left: 2px;
  background: #fff;
  border: 2px solid #8c8c8c;
  font-size: 23px;
  line-height: 33px;
`;

const SelectedDigit = styled.span`
  height: 33px;
  background: #c0c0c0;
`;

const Caret = styled.span`
  width: 2px;
  height: 33px;
  background: #000;
`;

const PreviewBox = styled.div`
  box-sizing: border-box;
  width: 390px;
  height: 383px;
  margin-left: 17px;
  margin-top: 15px;
  padding-top: 19px;
  background: #fff;
  border: 2px solid #6d6d6d;
`;

const PreviewRow = styled.div<{ $pl: number }>`
  display: flex;
  align-items: center;
  height: 9px;
  margin-bottom: 28.1px;
  padding-left: ${(p) => p.$pl}px;
`;

const PreviewBar = styled.span<{ $w: number; $gray?: boolean }>`
  flex: none;
  width: ${(p) => p.$w}px;
  height: 9px;
  background: ${(p) => (p.$gray ? "#a0a0a0" : "#000")};
`;

const PreviewNumber = styled.span`
  flex: none;
  width: 41px;
  margin-left: -1px;
  margin-right: 1px;
  font-family: "Liberation Sans", Arial, sans-serif;
  font-size: 26px;
  letter-spacing: -0.4px;
  line-height: 9px;
`;

const DialogActions = styled.div`
  display: flex;
  justify-content: flex-end;
  margin-top: 38px;
  padding-right: 1px;
`;

const TABS: [string, number][] = [
  ["File", 91],
  ["Home", 113],
  ["Insert", 104],
  ["Draw", 100],
  ["Design", 120],
  ["Layout", 121],
  ["References", 166],
  ["Mailings", 140],
  ["Review", 119],
  ["View", 94],
  ["Help", 80],
];

const PREVIEW = [
  { gray: true },
  { gray: true },
  { num: "1.1" },
  {},
  { num: "1.2" },
  {},
  { num: "1.3" },
  {},
  { gray: true },
  { gray: true },
];

const App = () => (
  <Shell>
    <GlobalStyle />
    <TitleBar>
      <WordLogo />
      <TitleText $ml={32} $w={96}>AutoSave</TitleText>
      <Toggle>
        <ToggleKnob />
        Off
      </Toggle>
      <SaveIcon />
      <TitleDivider $ml={21} />
      <ShapesIcon />
      <Chev ml={13} c="#b4b4b4" />
      <UndoIcon ml={26} />
      <Chev ml={14} c="#b4b4b4" />
      <RedoIcon ml={22} />
      <PrintIcon />
      <CustomizeIcon />
      <TitleDivider $ml={30} />
      <TitleText $ml={21} $w={468} $size={23.7}>Document1  -  Compatibility Mode  -  Word</TitleText>
      <SearchBox>
        <SearchGlass />
        <SearchHint>Search (Alt+Q)</SearchHint>
      </SearchBox>
      <TitleText $ml={68} $w={214} $size={23}>Lê Thị Thanh Huyền</TitleText>
      <Avatar>LT</Avatar>
      <MegaphoneIcon />
      <MinLine />
      <RestoreIcon />
      <CloseGlyph ml={76} size={19} c="#b4b4b4" sw={2} />
    </TitleBar>

    <TabRow>
      <TabList>
        {TABS.map(([name, w]) => (
          <Tab key={name} $w={w}>
            {name === "Home" ? <ActiveTabLabel>{name}</ActiveTabLabel> : name}
          </Tab>
        ))}
      </TabList>
      <CommentsButton>
        <CommentBubble />
        <CommentsLabel>Comments</CommentsLabel>
        <Ico width={20} height={12} viewBox="0 0 20 12" fill="none" stroke="#333" strokeWidth={1.8}>
          <path d="M1 1L10 11L19 1" />
        </Ico>
      </CommentsButton>
      <ShareButton>
        <ShareIcon />
        Share
      </ShareButton>
    </TabRow>

    <Ribbon>
      <Group $w={120}>
        <GroupBody>
          <StackRow $h={32} $mt={6} $ml={34}>
            <UndoIcon />
            <Chev ml={18} c="#c0c0c0" />
          </StackRow>
          <StackRow $h={32} $mt={20} $ml={32}>
            <RedoIcon />
          </StackRow>
        </GroupBody>
        <GroupLabel $pl={6}>Undo</GroupLabel>
      </Group>

      <Group $w={168}>
        <ClipboardBody>
          <BigButton $w={112}>
            <BigIconSlot $h={77} $pt={7}>
              <PasteIcon />
            </BigIconSlot>
            <BigLabel $size={21}>Paste</BigLabel>
            <Chev mt={10} />
          </BigButton>
          <SmallTools>
            <ScissorsIcon />
            <CopyIcon />
            <PainterIcon />
          </SmallTools>
        </ClipboardBody>
        <GroupLabel $launcher>Clipboard</GroupLabel>
        <Launcher>
          <LauncherIcon />
        </Launcher>
      </Group>

      <Group $w={624}>
        <GroupBody>
          <StackRow $h={46} $mt={15}>
            <Combo $w={248} $ml={16}>
              <ComboText>Calibri (Body)</ComboText>
              <Chev />
            </Combo>
            <Combo $w={87} $ml={4}>
              <ComboText>11</ComboText>
              <Chev />
            </Combo>
            <GrowIcon />
            <ShrinkIcon />
            <RowDivider $ml={13} />
            <CaseIcon />
            <Chev ml={11} />
            <RowDivider $ml={21} />
            <ClearIcon />
          </StackRow>
          <StackRow $h={48} $mt={16}>
            <BoldGlyph>B</BoldGlyph>
            <ItalicGlyph>I</ItalicGlyph>
            <UnderlineGlyph>U</UnderlineGlyph>
            <Chev ml={24} />
            <StrikeIcon />
            <SubIcon />
            <SupIcon />
            <RowDivider $ml={14} />
            <EffectsIcon />
            <Chev ml={12} c="#c0c0c0" />
            <HighlightIcon />
            <Chev ml={16} />
            <FontColorIcon />
            <Chev ml={16} />
          </StackRow>
        </GroupBody>
        <GroupLabel $launcher>Font</GroupLabel>
        <Launcher>
          <LauncherIcon />
        </Launcher>
      </Group>

      <Group $w={386}>
        <GroupBody>
          <StackRow $h={44} $mt={0}>
            <BulletsIcon />
            <Chev ml={18} />
            <NumberingIcon />
            <Chev ml={18} />
            <MultilevelIcon />
            <Chev ml={14} />
            <RowDivider $ml={21} />
            <IndentIcon ml={13} out />
            <IndentIcon ml={24} />
          </StackRow>
          <StackRow $h={47} $mt={6}>
            <SelectedAlign>
              <AlignIcon mode="left" />
            </SelectedAlign>
            <AlignIcon ml={14} mode="center" />
            <AlignIcon ml={24} mode="right" />
            <AlignIcon ml={24} mode="justify" />
            <RowDivider $ml={15} />
            <LineSpacingIcon />
            <Chev ml={12} />
          </StackRow>
          <StackRow $h={33} $mt={12}>
            <ShadingIcon />
            <Chev ml={16} />
            <BordersIcon />
            <Chev ml={18} />
          </StackRow>
        </GroupBody>
        <GroupLabel $launcher>Paragraph</GroupLabel>
      </Group>

      <Group $w={724}>
        <GroupBody>
          <Gallery>
            <StyleCell $w={216} $active>Normal</StyleCell>
            <StyleCell $w={214}>No Spacing</StyleCell>
            <StyleCell $w={213} $serif>Heading 1</StyleCell>
            <GalleryRail>
              <RailCell $h={38}>
                <GalleryScrollUp />
              </RailCell>
              <RailCell $h={38}>
                <Chev />
              </RailCell>
              <RailCell $h={37}>
                <GalleryMore />
              </RailCell>
            </GalleryRail>
          </Gallery>
        </GroupBody>
        <GroupLabel $launcher>Styles</GroupLabel>
        <Launcher>
          <LauncherIcon />
        </Launcher>
      </Group>

      <Group $w={108}>
        <GroupBody>
          <BigButton>
            <BigIconSlot $h={71} $pt={16}>
              <GlassIcon />
            </BigIconSlot>
            <BigLabel>Editing</BigLabel>
            <Chev mt={11} />
          </BigButton>
        </GroupBody>
        <GroupLabel />
      </Group>

      <Group $w={116}>
        <GroupBody>
          <BigButton>
            <BigIconSlot $h={74} $pt={6}>
              <MicIcon />
            </BigIconSlot>
            <BigLabel>Dictate</BigLabel>
          </BigButton>
        </GroupBody>
        <GroupLabel>Voice</GroupLabel>
      </Group>

      <Group $w={116}>
        <GroupBody>
          <BigButton>
            <BigIconSlot $h={74} $pt={6}>
              <EditorIcon />
            </BigIconSlot>
            <BigLabel>Editor</BigLabel>
          </BigButton>
        </GroupBody>
        <GroupLabel>Editor</GroupLabel>
      </Group>

      <Group $w={116}>
        <GroupBody>
          <BigButton>
            <BigIconSlot $h={74} $pt={14}>
              <ReuseIcon />
            </BigIconSlot>
            <BigLabel>Reuse</BigLabel>
            <BigLabel>Files</BigLabel>
          </BigButton>
        </GroupBody>
        <GroupLabel>Reuse Files</GroupLabel>
      </Group>

      <Group $w={148}>
        <GroupBody>
          <BigButton>
            <BigIconSlot $h={74} $pt={9}>
              <MathTypeIcon />
            </BigIconSlot>
            <BigLabel $size={22.5}>MathType</BigLabel>
          </BigButton>
        </GroupBody>
        <GroupLabel>Add-in</GroupLabel>
      </Group>

      <CollapseSlot>
        <CollapseChevron />
      </CollapseSlot>
    </Ribbon>

    <RulerBar>
      <RulerCorner>
        <TabStopMark />
      </RulerCorner>
      <HorizontalRulerArt />
    </RulerBar>

    <Workspace>
      <VerticalRuler>
        <VerticalRulerArt />
      </VerticalRuler>
      <DocArea>
        <DocPage />
      </DocArea>
    </Workspace>

    <Dialog>
      <DialogTitleBar>
        <DialogTitle>Define New Number Fo...</DialogTitle>
        <HelpMark>?</HelpMark>
        <CloseGlyph ml={71} size={20} c="#111" sw={1.8} />
      </DialogTitleBar>
      <DialogBody>
        <Legend>Number format</Legend>
        <FieldLabel $mt={17}>
          <u>N</u>umber style:
        </FieldLabel>
        <FieldRow $mt={8}>
          <DropDown $w={260}>
            <DropDownText>1, 2, 3, ...</DropDownText>
            <DropDownArrow>
              <Chev c="#555" sw={1.6} />
            </DropDownArrow>
          </DropDown>
          <DialogButton $ml={18}>
            <span>
              <u>F</u>ont...
            </span>
          </DialogButton>
        </FieldRow>
        <FieldLabel $mt={12}>
          Number f<u>o</u>rmat:
        </FieldLabel>
        <FieldRow $mt={7}>
          <FormatInput>
            1.
            <SelectedDigit>1</SelectedDigit>
            <Caret />
          </FormatInput>
        </FieldRow>
        <FieldLabel $mt={11}>
          Alig<u>n</u>ment:
        </FieldLabel>
        <FieldRow $mt={7}>
          <DropDown $w={256}>
            <DropDownText>Left</DropDownText>
            <DropDownArrow>
              <Chev c="#555" sw={1.6} />
            </DropDownArrow>
          </DropDown>
        </FieldRow>
        <Legend $mt={22}>Preview</Legend>
        <PreviewBox>
          {PREVIEW.map((row, i) =>
            row.gray ? (
              <PreviewRow key={i} $pl={14}>
                <PreviewBar $w={366} $gray />
              </PreviewRow>
            ) : row.num ? (
              <PreviewRow key={i} $pl={70}>
                <PreviewNumber>{row.num}</PreviewNumber>
                <PreviewBar $w={261} />
              </PreviewRow>
            ) : (
              <PreviewRow key={i} $pl={104}>
                <PreviewBar $w={276} />
              </PreviewRow>
            )
          )}
        </PreviewBox>
        <DialogActions>
          <DialogButton $primary>OK</DialogButton>
          <DialogButton $ml={19}>Cancel</DialogButton>
        </DialogActions>
      </DialogBody>
    </Dialog>
  </Shell>
);

export default App;
